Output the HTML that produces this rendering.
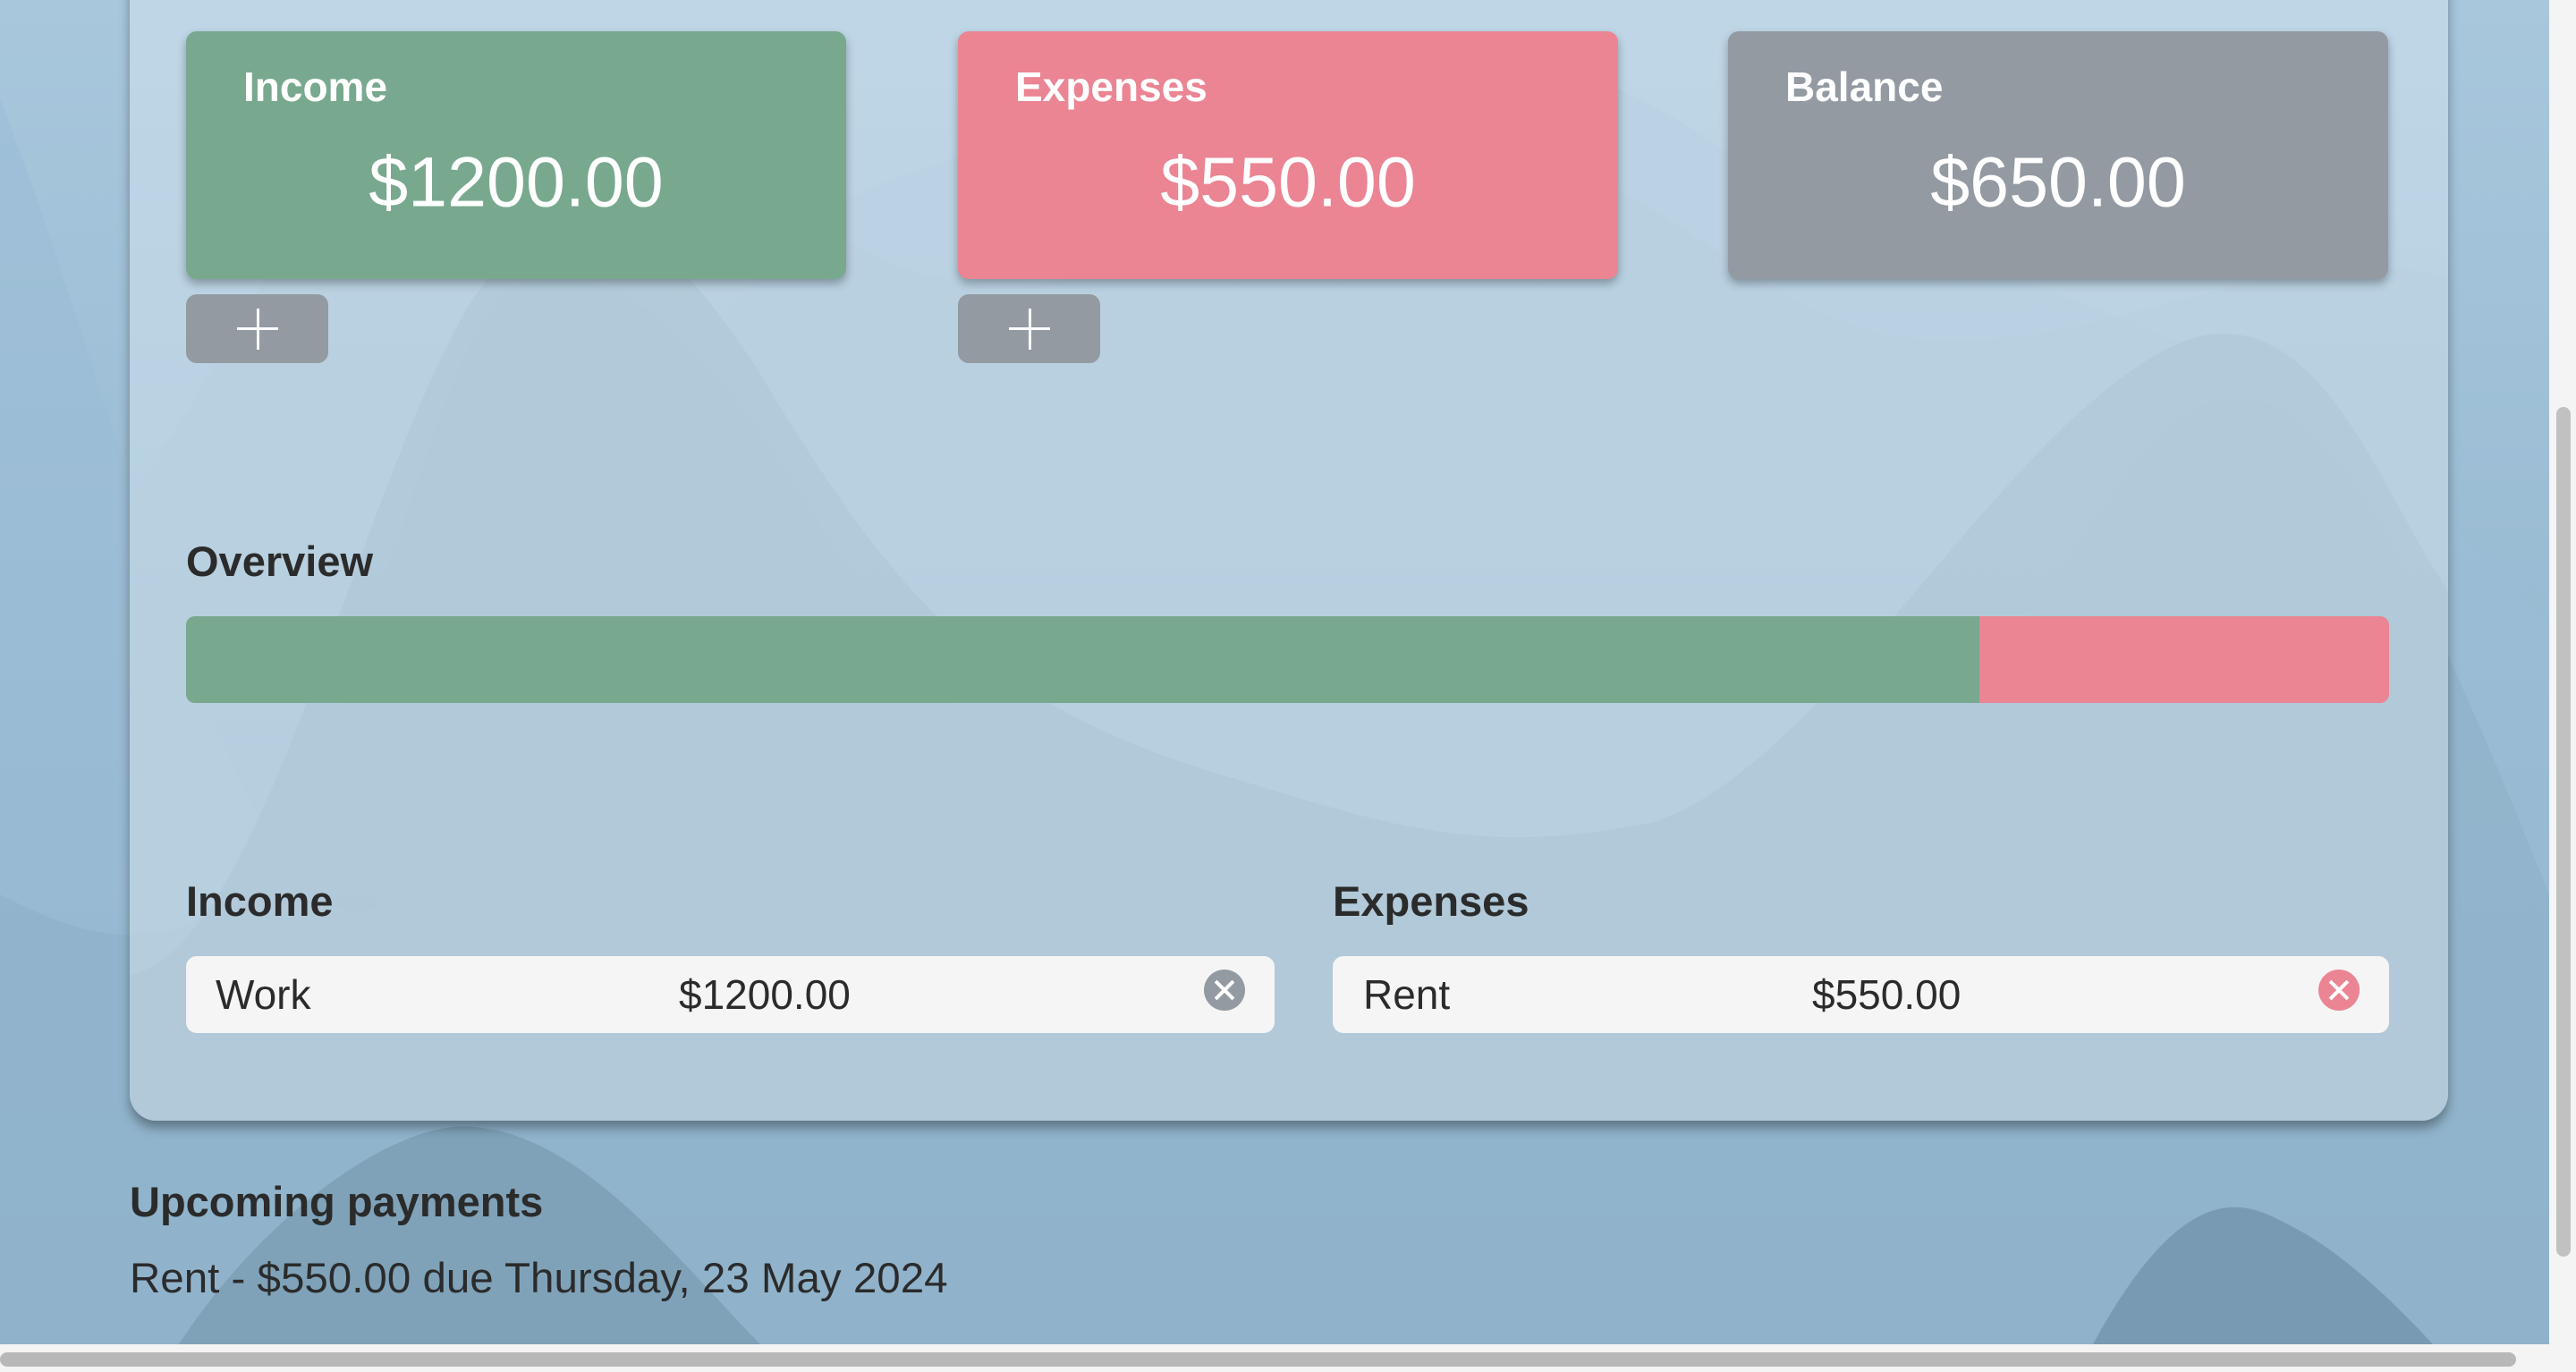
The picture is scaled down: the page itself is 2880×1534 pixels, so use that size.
<!DOCTYPE html>
<html><head><meta charset="utf-8"><style>
html,body{margin:0;padding:0;width:2880px;height:1534px;overflow:hidden;background:#f4f4f4;font-family:"Liberation Sans",Arial,sans-serif;color:#2b2b2b}
#vp{position:absolute;left:0;top:0;width:2850px;height:1503px;overflow:hidden;background:linear-gradient(#a8c7dd,#88aec7)}
svg.bg{position:absolute;left:0;top:0}
.panel{position:absolute;left:145px;top:-40px;width:2592px;height:1293px;border-radius:30px;background:rgba(220,232,242,0.45);box-shadow:0 8px 12px rgba(0,0,0,0.35);overflow:hidden}
.card{position:absolute;top:35px;width:738px;height:277px;border-radius:12px;box-shadow:0 5px 10px rgba(0,0,0,0.3);color:#fff}
.card .t{position:absolute;left:64px;top:35px;font-size:46px;font-weight:bold}
.card .a{position:absolute;left:0;right:0;top:168px;text-align:center;font-size:79px;line-height:1;transform:translateY(-50%)}
.plus{position:absolute;top:329px;width:159px;height:77px;border-radius:12px;background:#939aa2}
.plus:before{content:"";position:absolute;left:57px;top:37px;width:46px;height:3px;background:#fff}
.plus:after{content:"";position:absolute;left:79px;top:16px;width:3px;height:46px;background:#fff}
.h{position:absolute;font-size:47px;font-weight:bold}
.row{position:absolute;top:1069px;height:86px;border-radius:12px;background:#f5f5f5;font-size:46px}
.row span{position:absolute;top:16px}
.x{position:absolute;top:1084px;width:46px;height:46px;border-radius:50%}
.x:before,.x:after{content:"";position:absolute;left:21px;top:9px;width:4px;height:28px;background:#fff;transform:rotate(45deg)}
.x:after{transform:rotate(-45deg)}
</style></head><body>
<div id="vp">
<svg class="bg" width="2850" height="1503" viewBox="0 0 2850 1503">
<path d="M0 110 C150 500 250 1000 400 1020 C500 1030 700 300 1000 200 C1300 100 1600 -50 1900 150 C2200 350 2500 300 2850 700 L2850 1503 L0 1503 Z" fill="#9bbdd5" opacity="0.6"/>
<path d="M0 1000 C150 1080 250 1060 330 900 C450 650 500 350 580 320 C700 280 800 400 900 560 C1050 800 1100 850 1300 900 C1500 960 1700 1000 1900 1000 C2100 1000 2250 700 2400 500 C2550 350 2650 500 2850 1000 L2850 1503 L0 1503 Z" fill="#8eb1c8" opacity="0.6"/>
<path d="M200 1503 C300 1350 450 1250 530 1260 C650 1270 750 1400 850 1503 Z" fill="#7a9db4" opacity="0.8"/>
<path d="M2340 1503 C2450 1300 2520 1350 2560 1370 C2620 1400 2680 1460 2720 1503 Z" fill="#7698b0" opacity="0.9"/>
</svg>
<div class="panel">
<svg width="2592" height="1293" style="position:absolute;left:0;top:0">
<path d="M0 600 C200 300 250 100 450 80 C600 70 700 300 900 350 C1100 400 1200 250 1500 220 C1700 200 1800 400 2000 420 C2200 440 2400 300 2592 350 L2592 1293 L0 1293 Z" fill="#b8cfdd" opacity="0.45"/>
<path d="M0 1130 C150 1100 250 600 380 380 C500 200 600 300 700 450 C850 700 950 820 1200 900 C1400 960 1500 1000 1700 960 C1900 900 2100 500 2300 420 C2450 370 2520 600 2592 700 L2592 1293 L0 1293 Z" fill="#adc6d6" opacity="0.55"/>
</svg>
</div>
<div class="card" style="left:208px;background:#78a98f"><div class="t">Income</div><div class="a">$1200.00</div></div>
<div class="card" style="left:1071px;background:#eb8493"><div class="t">Expenses</div><div class="a">$550.00</div></div>
<div class="card" style="left:1932px;background:#939aa2"><div class="t">Balance</div><div class="a">$650.00</div></div>
<div class="plus" style="left:208px"></div>
<div class="plus" style="left:1071px"></div>
<div class="h" style="left:208px;top:600px">Overview</div>
<div style="position:absolute;left:208px;top:689px;width:2463px;height:97px;border-radius:10px;overflow:hidden;background:#eb8493"><div style="width:2005px;height:100%;background:#78a98f"></div></div>
<div class="h" style="left:208px;top:980px">Income</div>
<div class="h" style="left:1490px;top:980px">Expenses</div>
<div class="row" style="left:208px;width:1217px"><span style="left:33px">Work</span><span style="left:551px">$1200.00</span></div>
<div class="x" style="left:1346px;background:#939aa2"></div>
<div class="row" style="left:1490px;width:1181px"><span style="left:34px">Rent</span><span style="left:536px">$550.00</span></div>
<div class="x" style="left:2592px;background:#eb8493"></div>
<div class="h" style="left:145px;top:1316px">Upcoming payments</div>
<div style="position:absolute;left:145px;top:1402px;font-size:47.5px">Rent - $550.00 due Thursday, 23 May 2024</div>
</div>
<div style="position:absolute;left:2858px;top:455px;width:16px;height:950px;border-radius:8px;background:#c1c1c1"></div>
<div style="position:absolute;left:0;top:1512px;width:2813px;height:16px;border-radius:8px;background:#b8b8b8"></div>
</body></html>
